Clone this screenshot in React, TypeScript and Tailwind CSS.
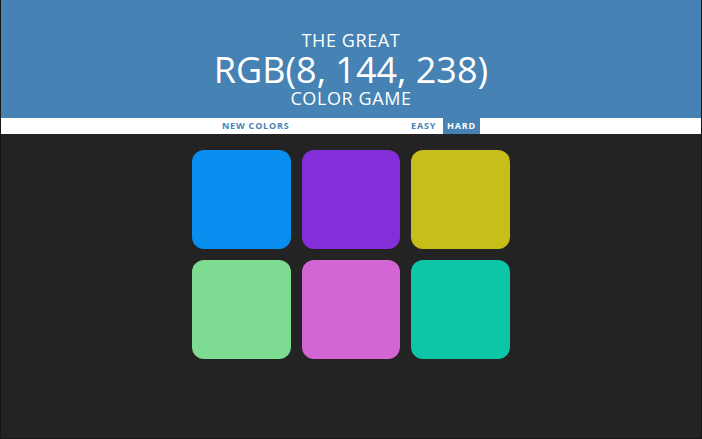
const colors = [
  "#088eee",
  "#842ed9",
  "#c7be1a",
  "#7ddc92",
  "#d365d5",
  "#0dc6a7",
]

export default function App() {
  return (
    <div className="flex h-[439px] w-[702px] flex-col border-x border-b border-[#161616] bg-[#232323] font-['Open_Sans',sans-serif]">
      {/* header */}
      <div className="flex h-[118px] flex-col items-center bg-[#4682b4] pt-[30px] text-white">
        <div className="text-[18px] leading-[20px] font-medium tracking-[0.6px] uppercase">The Great</div>
        <div className="mt-[3px] text-[36px] leading-[34px] font-normal">RGB(8, 144, 238)</div>
        <div className="mt-[1px] text-[18px] leading-[20px] font-medium tracking-[0.6px] uppercase">Color Game</div>
      </div>

      {/* stripe */}
      <div className="flex h-[16px] justify-center bg-white">
        <div className="flex w-[258px] items-stretch text-[9px] font-bold tracking-[0.8px] text-[#4682b4]">
          <button className="px-0 uppercase">New Colors</button>
          <span className="flex-1" />
          <button className="px-[3px] uppercase">Easy</button>
          <button className="ml-[4px] bg-[#4682b4] px-[4px] text-white uppercase">Hard</button>
        </div>
      </div>

      {/* squares */}
      <div className="mx-auto mt-[16px] grid w-[330px] grid-cols-3 gap-x-[11px] gap-y-[11px] px-[6px]">
        {colors.map((c) => (
          <div key={c} className="h-[99px] rounded-[12px]" style={{ backgroundColor: c }} />
        ))}
      </div>
    </div>
  )
}
